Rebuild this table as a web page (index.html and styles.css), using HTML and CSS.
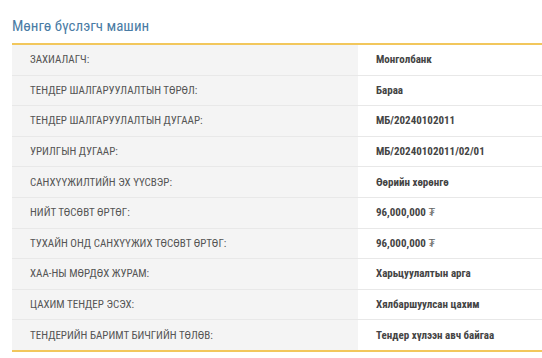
FILE: index.html
```html
<!DOCTYPE html>
<html>
<head>
<meta charset="utf-8">
<link rel="stylesheet" href="styles.css">
</head>
<body>
<div class="page">
  <h2 class="title">Мөнгө бүслэгч машин</h2>
  <table class="info">
    <tr><td class="lbl">ЗАХИАЛАГЧ:</td><td class="val">Монголбанк</td></tr>
    <tr><td class="lbl">ТЕНДЕР ШАЛГАРУУЛАЛТЫН ТӨРӨЛ:</td><td class="val">Бараа</td></tr>
    <tr><td class="lbl">ТЕНДЕР ШАЛГАРУУЛАЛТЫН ДУГААР:</td><td class="val">МБ/20240102011</td></tr>
    <tr><td class="lbl">УРИЛГЫН ДУГААР:</td><td class="val">МБ/20240102011/02/01</td></tr>
    <tr><td class="lbl">САНХҮҮЖИЛТИЙН ЭХ ҮҮСВЭР:</td><td class="val">Өөрийн хөрөнгө</td></tr>
    <tr><td class="lbl">НИЙТ ТӨСӨВТ ӨРТӨГ:</td><td class="val">96,000,000 <span class="cur">₮</span></td></tr>
    <tr><td class="lbl">ТУХАЙН ОНД САНХҮҮЖИХ ТӨСӨВТ ӨРТӨГ:</td><td class="val">96,000,000 <span class="cur">₮</span></td></tr>
    <tr><td class="lbl">ХАА-НЫ МӨРДӨХ ЖУРАМ:</td><td class="val">Харьцуулалтын арга</td></tr>
    <tr><td class="lbl">ЦАХИМ ТЕНДЕР ЭСЭХ:</td><td class="val">Хялбаршуулсан цахим</td></tr>
    <tr><td class="lbl">ТЕНДЕРИЙН БАРИМТ БИЧГИЙН ТӨЛӨВ:</td><td class="val">Тендер хүлээн авч байгаа</td></tr>
  </table>
</div>
</body>
</html>
```

FILE: styles.css
```css
html, body {
  margin: 0;
  padding: 0;
  background: #ffffff;
}
.page {
  padding: 14px 0 0 12px;
  font-family: "Liberation Sans Narrow", "Roboto Condensed", "Open Sans", "Liberation Sans", sans-serif;
  font-stretch: condensed;
}
.title {
  margin: 0;
  height: 29px;
  font-size: 15px;
  font-weight: normal;
  color: #4a7ca5;
  line-height: 25px;
}
.info {
  width: 100%;
  border-collapse: collapse;
  border-top: 2px solid #f2c75c;
  border-bottom: 2px solid #f2c75c;
}
.info td {
  height: 29.6px;
  padding: 0;
  font-size: 11px;
  border-bottom: 1px solid #e8e8e8;
  vertical-align: middle;
}
.info tr:last-child td {
  border-bottom: none;
}
.lbl {
  width: 346px;
  box-sizing: border-box;
  padding-left: 18px !important;
  background: #f4f4f4;
  color: #555555;
}
.val {
  padding-left: 18px !important;
  font-weight: bold;
  color: #444444;
}
.cur {
  font-weight: normal;
  color: #666;
}
```
